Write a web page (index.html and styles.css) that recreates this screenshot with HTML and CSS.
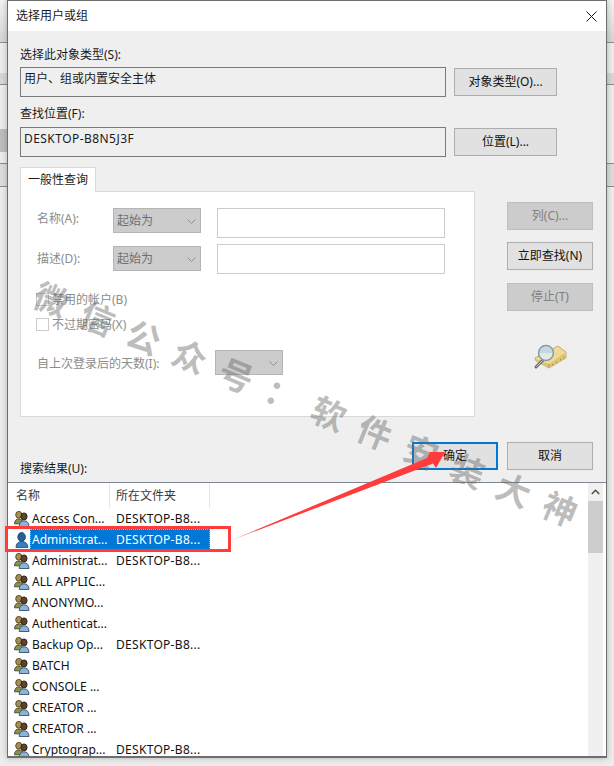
FILE: index.html
```html
<!DOCTYPE html>
<html lang="zh-CN">
<head>
<meta charset="utf-8">
<title>选择用户或组</title>
<link rel="stylesheet" href="styles.css">
</head>
<body>
<svg class="defs" width="0" height="0" aria-hidden="true">
  <defs>
    <symbol id="group" viewBox="0 0 16 16">
      <ellipse cx="4.8" cy="3.8" rx="3.1" ry="3.4" fill="#a88d4c" stroke="#4c4322" stroke-width=".9"/>
      <path d="M.5 12.8c0-3.2 1.8-4.8 4.4-4.8s4.4 1.6 4.4 4.8z" fill="#87924e" stroke="#434624" stroke-width=".9"/>
      <ellipse cx="10" cy="5.4" rx="3.1" ry="3.5" fill="#5c432c" stroke="#2a2015" stroke-width=".9"/>
      <path d="M5.2 15.5c0-3.7 2-5.7 4.9-5.7s4.9 2 4.9 5.7z" fill="#8db4d6" stroke="#38516e" stroke-width=".9"/>
    </symbol>
    <symbol id="user" viewBox="0 0 16 16">
      <ellipse cx="7.6" cy="5" rx="3.8" ry="4.5" fill="#245f96" stroke="#173f66" stroke-width=".8"/>
      <path d="M2 15.6c0-4 2.4-6 5.8-6s6 2 6 6z" fill="#3a80bf" stroke="#173f66" stroke-width=".8"/>
    </symbol>
  </defs>
</svg>

<main class="dialog">
  <header class="titlebar">
    <span>选择用户或组</span>
    <svg class="close" viewBox="0 0 11 11" width="11" height="11"><path d="M.5.5l10 10M10.5.5l-10 10" stroke="#1a1a1a" fill="none"/></svg>
  </header>

  <div class="body">
    <div class="label first">选择此对象类型(S):</div>
    <div class="field-row">
      <div class="readonly">用户、组或内置安全主体</div>
      <button class="btn wide">对象类型(O)...</button>
    </div>
    <div class="label second">查找位置(F):</div>
    <div class="field-row tight">
      <div class="readonly latin">DESKTOP-B8N5J3F</div>
      <button class="btn wide">位置(L)...</button>
    </div>

    <div class="query">
      <div class="tabs">
        <div class="tab">一般性查询</div>
        <div class="panel">
          <div class="q-row">
            <span class="q-label">名称(A):</span>
            <span class="select name"><span>起始为</span><svg class="chev" viewBox="0 0 9 5" width="9" height="5"><path d="M.5.5l4 4 4-4" fill="none" stroke="#8f8f8f"/></svg></span>
            <span class="input"></span>
          </div>
          <div class="q-row next">
            <span class="q-label">描述(D):</span>
            <span class="select desc"><span>起始为</span><svg class="chev" viewBox="0 0 9 5" width="9" height="5"><path d="M.5.5l4 4 4-4" fill="none" stroke="#8f8f8f"/></svg></span>
            <span class="input"></span>
          </div>
          <div class="check c1"><span class="box"></span><span>禁用的帐户(B)</span></div>
          <div class="check c2"><span class="box"></span><span>不过期密码(X)</span></div>
          <div class="days">
            <span class="days-label">自上次登录后的天数(I):</span>
            <span class="select small"><svg class="chev" viewBox="0 0 9 5" width="9" height="5"><path d="M.5.5l4 4 4-4" fill="none" stroke="#8f8f8f"/></svg></span>
          </div>
        </div>
      </div>
      <div class="side">
        <button class="btn side-btn off">列(C)...</button>
        <button class="btn side-btn mid">立即查找(N)</button>
        <button class="btn side-btn off last">停止(T)</button>
        <svg class="finder" viewBox="0 0 34 26" width="34" height="26">
          <path d="M2 14 25 2l8 6v6L16 24 3 17z" fill="#eedc94" stroke="#a8945a" stroke-width=".7"/>
          <path d="M3 15l13 5 17-12v6L16 24 3 17z" fill="#dcc578"/>
          <path d="M16 20v4" stroke="#b09c5e"/>
          <path d="M19 21l1-.7M23 18.5l1-.7M27 16l1-.7M30.500 14l1-.7" stroke="#8d7c48"/>
          <path d="M3 23l7-7" stroke="#6a6a6a" stroke-width="3" stroke-linecap="round"/>
          <path d="M3.400 22.600l6.200-6.200" stroke="#d5d5d5"/>
          <circle cx="13" cy="9" r="7.400" fill="#e2eadc" stroke="#7f98ad" stroke-width="1.500"/>
          <path d="M6.500 9a6.500 6.500 0 0 1 13 0z" fill="#b8d0e4" opacity=".75"/>
        </svg>
      </div>
    </div>

    <div class="foot">
      <div class="label results">搜索结果(U):</div>
      <div class="foot-btns">
        <button class="btn action default">确定</button>
        <button class="btn action">取消</button>
      </div>
    </div>
  </div>

  <section class="list">
    <div class="table">
      <div class="thead">
        <div class="th">名称</div>
        <div class="th">所在文件夹</div>
      </div>
      <div class="row"><svg class="ico"><use href="#group"/></svg><span class="c-name">Access Con...</span><span class="c-loc">DESKTOP-B8...</span></div>
      <div class="row sel"><svg class="ico"><use href="#user"/></svg><span class="sel-cells"><span class="c-name">Administrat...</span><span class="c-loc">DESKTOP-B8...</span></span></div>
      <div class="row"><svg class="ico"><use href="#group"/></svg><span class="c-name">Administrat...</span><span class="c-loc">DESKTOP-B8...</span></div>
      <div class="row"><svg class="ico"><use href="#group"/></svg><span class="c-name">ALL APPLIC...</span></div>
      <div class="row"><svg class="ico"><use href="#group"/></svg><span class="c-name">ANONYMO...</span></div>
      <div class="row"><svg class="ico"><use href="#group"/></svg><span class="c-name">Authenticat...</span></div>
      <div class="row"><svg class="ico"><use href="#group"/></svg><span class="c-name">Backup Op...</span><span class="c-loc">DESKTOP-B8...</span></div>
      <div class="row"><svg class="ico"><use href="#group"/></svg><span class="c-name">BATCH</span></div>
      <div class="row"><svg class="ico"><use href="#group"/></svg><span class="c-name">CONSOLE ...</span></div>
      <div class="row"><svg class="ico"><use href="#group"/></svg><span class="c-name">CREATOR ...</span></div>
      <div class="row"><svg class="ico"><use href="#group"/></svg><span class="c-name">CREATOR ...</span></div>
      <div class="row"><svg class="ico"><use href="#group"/></svg><span class="c-name">Cryptograp...</span><span class="c-loc">DESKTOP-B8...</span></div>
    </div>
    <div class="scrollbar">
      <svg class="up" viewBox="0 0 9 6" width="9" height="6"><path d="M.8 5 4.500 1.300 8.200 5" fill="none" stroke="#505050" stroke-width="1.600"/></svg>
      <div class="thumb"></div>
    </div>
  </section>
</main>

<div class="watermark">微信公众号：软件安装大神</div>

<div class="redbox"></div>
<svg class="arrow" viewBox="0 0 614 766" width="614" height="766">
  <path d="M232 540 427 458 430 452 445 452 436 468 433 463.500z" fill="#ff3b3b"/>
</svg>
</body>
</html>
```
FILE: styles.css
```css
* { box-sizing: border-box; }
html, body { margin: 0; padding: 0; }
body {
  position: relative;
  width: 614px;
  height: 766px;
  overflow: hidden;
  font: 12px/18px "Noto Sans", "Noto Sans CJK SC", sans-serif;
  color: #1a1a1a;
  background:
    linear-gradient(#8d8d8d, #8d8d8d) 0 42px / 100% 1px no-repeat,
    linear-gradient(#8d8d8d, #8d8d8d) 0 84px / 100% 1px no-repeat,
    linear-gradient(#8d8d8d, #8d8d8d) 0 163px / 100% 1px no-repeat,
    linear-gradient(#8d8d8d, #8d8d8d) 0 186px / 100% 1px no-repeat,
    linear-gradient(#d6d6d6, #d6d6d6) 0 73px / 100% 11px no-repeat,
    linear-gradient(#bdbdbd, #bdbdbd) 0 129px / 7px 23px no-repeat,
    linear-gradient(#dcdcdc, #dcdcdc) 0 163px / 100% 23px no-repeat,
    linear-gradient(#f2f2f2, #d4d4d4) 0 0 / 100% 42px no-repeat,
    #ececec;
}
.defs { position: absolute; }

.dialog {
  display: flex;
  flex-direction: column;
  width: 600px;
  height: 758px;
  margin-left: 7px;
  border: 1px solid #6e6e6e;
  border-width: 1px 1px 2px 1px;
  background: #efefef;
  box-shadow: 0 0 6px rgba(0, 0, 0, .25);
}
.titlebar {
  display: flex;
  align-items: center;
  justify-content: space-between;
  height: 30px;
  padding: 0 9px 0 8px;
  background: #fff;
  font-size: 12px;
}
.body { padding: 0 13px 0 12px; }
.label { height: 18px; white-space: nowrap; }
.label.first { margin-top: 15px; }
.label.second { margin-top: 8px; }

.field-row { display: flex; gap: 8px; margin-top: 3px; }
.field-row.tight { margin-top: 4px; }
.readonly {
  width: 426px;
  height: 30px;
  padding: 2px 3px;
  border: 1px solid #7a7a7a;
  background: #efefef;
}
.latin { letter-spacing: .45px; }
.btn {
  padding: 0;
  height: 28px;
  border: 1px solid #adadad;
  background: #e1e1e1;
  color: #111;
  font: inherit;
}
.btn.wide { width: 103px; margin-top: 1px; }

.query { display: flex; margin-top: 10px; }
.tabs { width: 455px; }
.tab {
  width: 76px;
  height: 25px;
  margin-bottom: -1px;
  padding: 3px 0 0 7px;
  position: relative;
  border: 1px solid #d9d9d9;
  border-bottom: 0;
  background: #fff;
}
.panel {
  height: 226px;
  padding: 16px 0 0 15px;
  border: 1px solid #d9d9d9;
  background: #fff;
  color: #8c8c8c;
}
.q-row { display: flex; align-items: flex-start; height: 30px; }
.q-row.next { margin-top: 6px; }
.q-label { width: 77px; padding: 2px 0 0 1px; }
.q-row.next .q-label { padding-top: 6px; }
.select {
  display: flex;
  align-items: center;
  justify-content: space-between;
  height: 25px;
  padding: 1px 4px 0 3px;
  border: 1px solid #b5b5b5;
  background: #ccc;
  color: #6f6f6f;
}
.select.name, .select.desc { width: 88px; }
.select.desc { margin-top: 2px; }
.select.small { width: 68px; justify-content: flex-end; }
.chev { flex: none; }
.input {
  width: 228px;
  height: 30px;
  margin-left: 16px;
  border: 1px solid #ccc;
  background: #fff;
}
.check { display: flex; align-items: center; gap: 3px; height: 13px; }
.check.c1 { margin-top: 19px; }
.check.c2 { margin-top: 12px; }
.box { width: 13px; height: 13px; border: 1px solid #ccc; background: #fff; }
.days { display: flex; align-items: center; height: 25px; margin-top: 19px; }
.days-label { width: 179px; padding: 3px 0 0 1px; white-space: nowrap; }

.side { display: flex; flex-direction: column; width: 86px; margin: 35px 0 0 32px; }
.side-btn { width: 86px; flex: none; }
.side-btn.mid { margin-top: 12px; }
.side-btn.last { margin-top: 13px; }
.btn.off { background: #ccc; border-color: #bfbfbf; color: #7f7f7f; }
.finder { margin: 33px 0 0 26px; }

.foot {
  display: flex;
  justify-content: space-between;
  align-items: flex-end;
  height: 36px;
  margin-top: 25px;
}
.foot-btns { display: flex; gap: 9px; align-self: flex-start; }
.action { width: 86px; }
.action.default { border: 2px solid #0078d7; }

.list {
  flex: 1;
  display: flex;
  min-height: 0;
  margin-top: 4px;
  border-top: 1px solid #7f8790;
  background: #fff;
  overflow: hidden;
}
.table { flex: 1; min-width: 0; }
.thead { display: flex; height: 25px; padding-left: 2px; }
.th {
  width: 100px;
  padding: 4px 0 0 6px;
  border-right: 1px solid #e5e5e5;
  color: #3a3a3a;
}
.row { display: flex; align-items: center; height: 21px; color: #111; }
.ico { width: 16px; height: 16px; flex: none; margin-left: 6px; }
.c-name {
  width: 86px;
  padding-left: 2px;
  white-space: nowrap;
  flex: none;
}
.c-loc { white-space: nowrap; letter-spacing: .3px; }
.sel-cells {
  display: flex;
  align-items: center;
  width: 180px;
  height: 21px;
  background: #0078d7;
  color: #fff;
  outline: 1px dotted #e0a060;
  outline-offset: -1px;
}

.scrollbar { width: 15px; margin-right: 3px; padding-top: 6px; background: #f0f0f0; text-align: center; }
.up { display: block; margin: 0 auto; }
.thumb { height: 52px; margin-top: 6px; background: #cdcdcd; }

.watermark {
  position: absolute;
  left: 36px;
  top: 272px;
  transform: rotate(22.4deg);
  transform-origin: 0 50%;
  font: 700 34px/40px "Noto Sans CJK SC", sans-serif;
  letter-spacing: 16px;
  white-space: nowrap;
  color: rgba(105, 105, 105, .45);
  pointer-events: none;
}
.redbox {
  position: absolute;
  left: 5px;
  top: 526px;
  width: 226px;
  height: 26px;
  border: 3px solid #ff3b3b;
}
.arrow { position: absolute; left: 0; top: 0; pointer-events: none; }
```
